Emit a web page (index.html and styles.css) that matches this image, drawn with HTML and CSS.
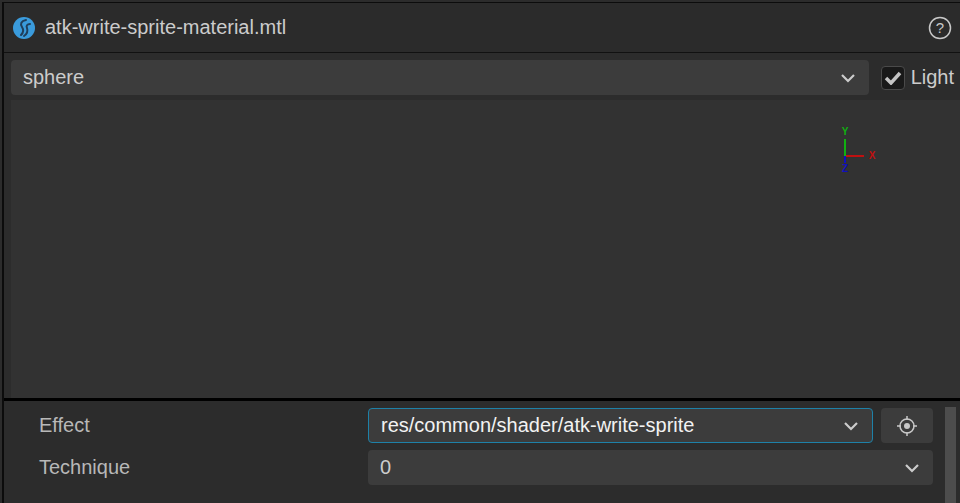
FILE: index.html
```html
<!DOCTYPE html>
<html lang="en">

<head>
    <meta charset="UTF-8">
    <title>atk-write-sprite-material.mtl</title>
    <link rel="stylesheet" href="styles.css">
</head>

<body>
    <div class="panel">
        <div class="header">
            <svg class="logo" width="24" height="24" viewBox="0 0 24 24">
                <circle cx="12" cy="12" r="11" fill="#3a9bdc" />
                <path d="M14 4C9 5 8 8 10 11C12 14 11 17 9 19" fill="none" stroke="#1f3f5c" stroke-width="2" stroke-linecap="round" />
                <path d="M18 8C15 8 14 10 15 12C16 15 15 18 12 20" fill="none" stroke="#1f3f5c" stroke-width="2" stroke-linecap="round" />
            </svg>
            <span class="file-name">atk-write-sprite-material.mtl</span>
            <svg class="help" width="24" height="24" viewBox="0 0 24 24">
                <circle cx="12" cy="12" r="10.5" fill="none" stroke="#c8c8c8" stroke-width="1.5" />
                <text x="12" y="17" text-anchor="middle" class="help-mark">?</text>
            </svg>
        </div>
        <div class="toolbar">
            <div class="select grow">
                <span>sphere</span>
                <svg class="arrow" width="16" height="10" viewBox="0 0 16 10"><path d="M2 2L8 8L14 2" /></svg>
            </div>
            <label class="light">
                <span class="checkbox">
                    <svg width="18" height="14" viewBox="0 0 18 14"><path d="M2 7L7 12L16 2" /></svg>
                </span>
                Light
            </label>
        </div>
        <div class="preview">
            <svg class="gizmo" width="40" height="60" viewBox="0 0 40 60">
                <rect x="6" y="13" width="2" height="17" fill="#10b010" />
                <rect x="8" y="29" width="18" height="2" fill="#c01010" />
                <rect x="6" y="30" width="2" height="7" fill="#1010c0" />
                <text x="7" y="9" class="axis y">Y</text>
                <text x="34" y="33" class="axis x">X</text>
                <text x="7" y="46" class="axis z">Z</text>
            </svg>
        </div>
        <div class="divider"></div>
        <div class="props">
            <div class="rows">
                <div class="row">
                    <div class="label">Effect</div>
                    <div class="field">
                        <div class="select grow focus">
                            <span>res/common/shader/atk-write-sprite</span>
                            <svg class="arrow" width="16" height="10" viewBox="0 0 16 10"><path d="M2 2L8 8L14 2" /></svg>
                        </div>
                        <div class="icon-btn">
                            <svg width="20" height="20" viewBox="0 0 20 20">
                                <circle cx="10" cy="10" r="7" fill="none" stroke="#c8c8c8" stroke-width="1.5" />
                                <circle cx="10" cy="10" r="3" fill="#c8c8c8" />
                                <path d="M10 0V4M10 16V20M0 10H4M16 10H20" stroke="#c8c8c8" stroke-width="1.5" />
                            </svg>
                        </div>
                    </div>
                </div>
                <div class="row">
                    <div class="label">Technique</div>
                    <div class="field">
                        <div class="select grow">
                            <span>0</span>
                            <svg class="arrow" width="16" height="10" viewBox="0 0 16 10"><path d="M2 2L8 8L14 2" /></svg>
                        </div>
                    </div>
                </div>
            </div>
            <div class="scrollbar"></div>
        </div>
    </div>
</body>

</html>
```

FILE: styles.css
```css
* {
    padding: 0px;
    margin: 0px;
    box-sizing: border-box;
}

body {
    background-color: #2c2c2c;
    height: 503px;
    overflow: hidden;
    font-family: "Liberation Sans", Arial, sans-serif;
    font-size: 20px;
    color: #cccccc;
}

.panel {
    height: 503px;
    margin-top: 2px;
    margin-left: 2px;
    border-top: 1px solid #0c0c0c;
    border-left: 2px solid #0c0c0c;
    display: flex;
    flex-direction: column;
}

.header {
    height: 50px;
    flex-shrink: 0;
    display: flex;
    align-items: center;
    padding: 0 8px 0 8px;
    border-bottom: 1px solid #111111;
    background-color: #2b2b2b;
}

.logo {
    margin-right: 9px;
}

.file-name {
    flex: 1;
}

.help-mark {
    font-size: 15px;
    fill: #c8c8c8;
}

.toolbar {
    height: 47px;
    flex-shrink: 0;
    display: flex;
    align-items: center;
    padding: 7px 6px 5px 7px;
}

.select {
    height: 35px;
    background-color: #3c3c3c;
    border-radius: 4px;
    display: flex;
    align-items: center;
    justify-content: space-between;
    padding: 0 13px 0 12px;
}

.grow {
    flex: 1;
}

.focus {
    border: 1px solid #1e81a8;
    color: #f2f2f2;
}

.arrow path {
    fill: none;
    stroke: #cccccc;
    stroke-width: 2.2;
}

.light {
    display: flex;
    align-items: center;
    margin-left: 12px;
    gap: 6px;
}

.checkbox {
    width: 24px;
    height: 24px;
    background-color: #191919;
    border: 1px solid #4a4a4a;
    border-radius: 4px;
    display: flex;
    align-items: center;
    justify-content: center;
}

.checkbox path {
    fill: none;
    stroke: #c4c4c4;
    stroke-width: 3.5;
}

.preview {
    height: 298px;
    flex-shrink: 0;
    background-color: #323232;
    margin-left: 7px;
    display: flex;
    justify-content: flex-end;
    padding: 26px 82px 0 0;
}

.axis {
    font-size: 10px;
    font-weight: bold;
    text-anchor: middle;
}

.y {
    fill: #10b010;
}

.x {
    fill: #c01010;
}

.z {
    fill: #1010c0;
}

.divider {
    height: 3px;
    flex-shrink: 0;
    background-color: #000000;
}

.props {
    flex: 1;
    display: flex;
    padding-top: 7px;
}

.rows {
    flex: 1;
}

.row {
    display: flex;
    align-items: center;
    margin-bottom: 7px;
}

.label {
    width: 364px;
    padding-left: 35px;
    color: #b8b8b8;
}

.field {
    flex: 1;
    display: flex;
    gap: 8px;
}

.icon-btn {
    width: 52px;
    height: 35px;
    background-color: #3c3c3c;
    border-radius: 4px;
    display: flex;
    align-items: center;
    justify-content: center;
}

.scrollbar {
    width: 11px;
    margin-left: 12px;
    margin-right: 4px;
    margin-top: -1px;
    background-color: #4d4d4d;
}
```
